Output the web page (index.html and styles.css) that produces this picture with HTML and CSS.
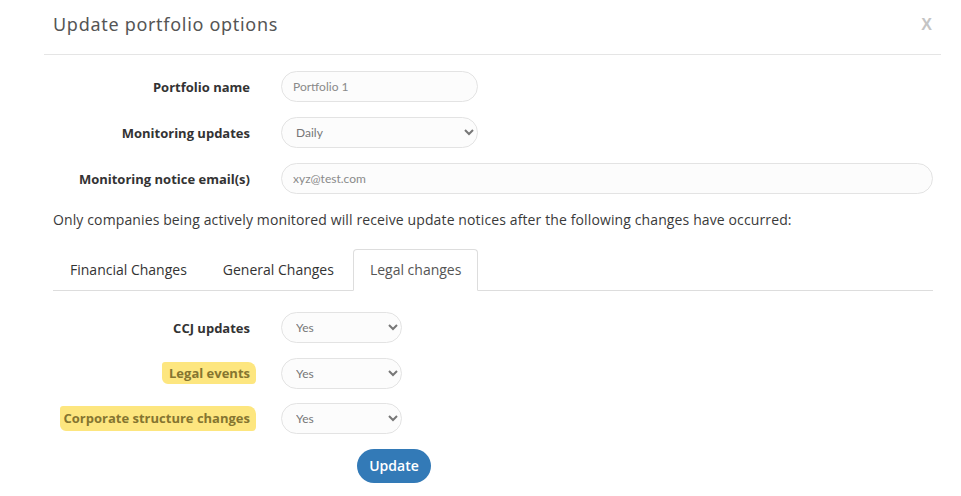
FILE: index.html
```html
<!DOCTYPE html>
<html lang="en">
<head>
<meta charset="utf-8">
<title>Update portfolio options</title>
<link rel="stylesheet" href="styles.css">
</head>
<body>
<div class="modal">
  <div class="modal-header">
    <h4 class="modal-title">Update portfolio options</h4>
    <span class="close">X</span>
  </div>
  <div class="modal-body">
    <div class="form-row">
      <label class="form-label">Portfolio name</label>
      <input class="control control-md" type="text" value="Portfolio 1">
    </div>
    <div class="form-row">
      <label class="form-label">Monitoring updates</label>
      <select class="control control-md"><option>Daily</option></select>
    </div>
    <div class="form-row">
      <label class="form-label">Monitoring notice email(s)</label>
      <input class="control control-full" type="text" value="xyz@test.com">
    </div>
    <p class="notice">Only companies being actively monitored will receive update notices after the following changes have occurred:</p>
    <ul class="tabs">
      <li class="tab">Financial Changes</li>
      <li class="tab">General Changes</li>
      <li class="tab active">Legal changes</li>
    </ul>
    <div class="tab-pane">
      <div class="form-row">
        <label class="form-label">CCJ updates</label>
        <select class="control control-sm"><option>Yes</option></select>
      </div>
      <div class="form-row">
        <label class="form-label"><span class="marker marker-short">Legal events</span></label>
        <select class="control control-sm"><option>Yes</option></select>
      </div>
      <div class="form-row">
        <label class="form-label"><span class="marker marker-long">Corporate structure changes</span></label>
        <select class="control control-sm"><option>Yes</option></select>
      </div>
      <div class="actions">
        <button class="btn-primary" type="button">Update</button>
      </div>
    </div>
  </div>
</div>
</body>
</html>
```

FILE: styles.css
```css
html, body {
  margin: 0;
  padding: 0;
  background: #ffffff;
}
body {
  font-family: "Open Sans", "Liberation Sans", sans-serif;
  color: #333333;
  font-size: 14px;
}
.modal {
  margin-left: 44px;
  width: 897px;
}
.modal-header {
  display: flex;
  justify-content: space-between;
  align-items: flex-start;
  padding: 12px 9px 17px 9px;
  border-bottom: 1px solid #e5e5e5;
}
.modal-title {
  margin: 0;
  font-family: "Noto Sans", "DejaVu Sans", sans-serif;
  font-weight: 400;
  font-size: 18px;
  line-height: 25px;
  color: #555555;
  letter-spacing: 0.7px;
}
.close {
  font-family: "Liberation Sans", sans-serif;
  font-weight: 700;
  font-size: 16px;
  line-height: 20px;
  color: #c4c4c4;
  margin-top: 3px;
}
.modal-body {
  padding: 16px 8px 0 9px;
}
.form-row {
  display: flex;
  align-items: center;
  margin-bottom: 15px;
}
.tab-pane .form-row {
  margin-bottom: 14.5px;
}
.form-label {
  width: 197px;
  padding-right: 31px;
  text-align: right;
  font-weight: 700;
  font-size: 13px;
  color: #333333;
  flex-shrink: 0;
}
.control {
  box-sizing: border-box;
  height: 31px;
  border: 1px solid #e3e3e3;
  border-radius: 16px;
  background: #fcfcfc;
  font-family: "Lato", "Open Sans", sans-serif;
  font-size: 12px;
  color: #8a8a8a;
  padding: 0 10px 0 11px;
  outline: none;
}
select.control {
  padding-left: 10px;
  color: #777777;
}
.control-md { width: 197px; }
.control-full { flex: 1; }
.control-sm { width: 121px; }
.notice {
  margin: 16px 0 19px 0;
  line-height: 20px;
  font-size: 14px;
  color: #3a3a3a;
  letter-spacing: 0.12px;
}
.tabs {
  list-style: none;
  margin: 0;
  padding: 0;
  display: flex;
  border-bottom: 1px solid #dddddd;
}
.tab {
  padding: 10px 16px;
  line-height: 20px;
  margin-right: 2px;
  margin-bottom: -1px;
  border: 1px solid transparent;
  border-radius: 4px 4px 0 0;
  color: #333333;
  font-size: 14px;
}
.tab.active {
  border-color: #dddddd;
  border-bottom-color: #ffffff;
  color: #555555;
  background: #ffffff;
}
.tab-pane {
  padding-top: 21px;
}
.marker {
  display: inline-block;
  background: #fde67f;
  color: #857530;
  padding: 2px 6px 2px 7px;
  margin-right: -6px;
  border-radius: 3px 8px 4px 6px;
}
.marker-long {
  padding: 3px 6px 4px 4px;
}
.actions {
  padding-left: 304px;
  margin-top: 0;
}
.btn-primary {
  height: 34px;
  width: 74px;
  border: none;
  border-radius: 17px;
  background: #337ab7;
  color: #ffffff;
  font-family: "Open Sans", sans-serif;
  font-size: 14px;
  font-weight: 600;
  padding: 0;
}
```
